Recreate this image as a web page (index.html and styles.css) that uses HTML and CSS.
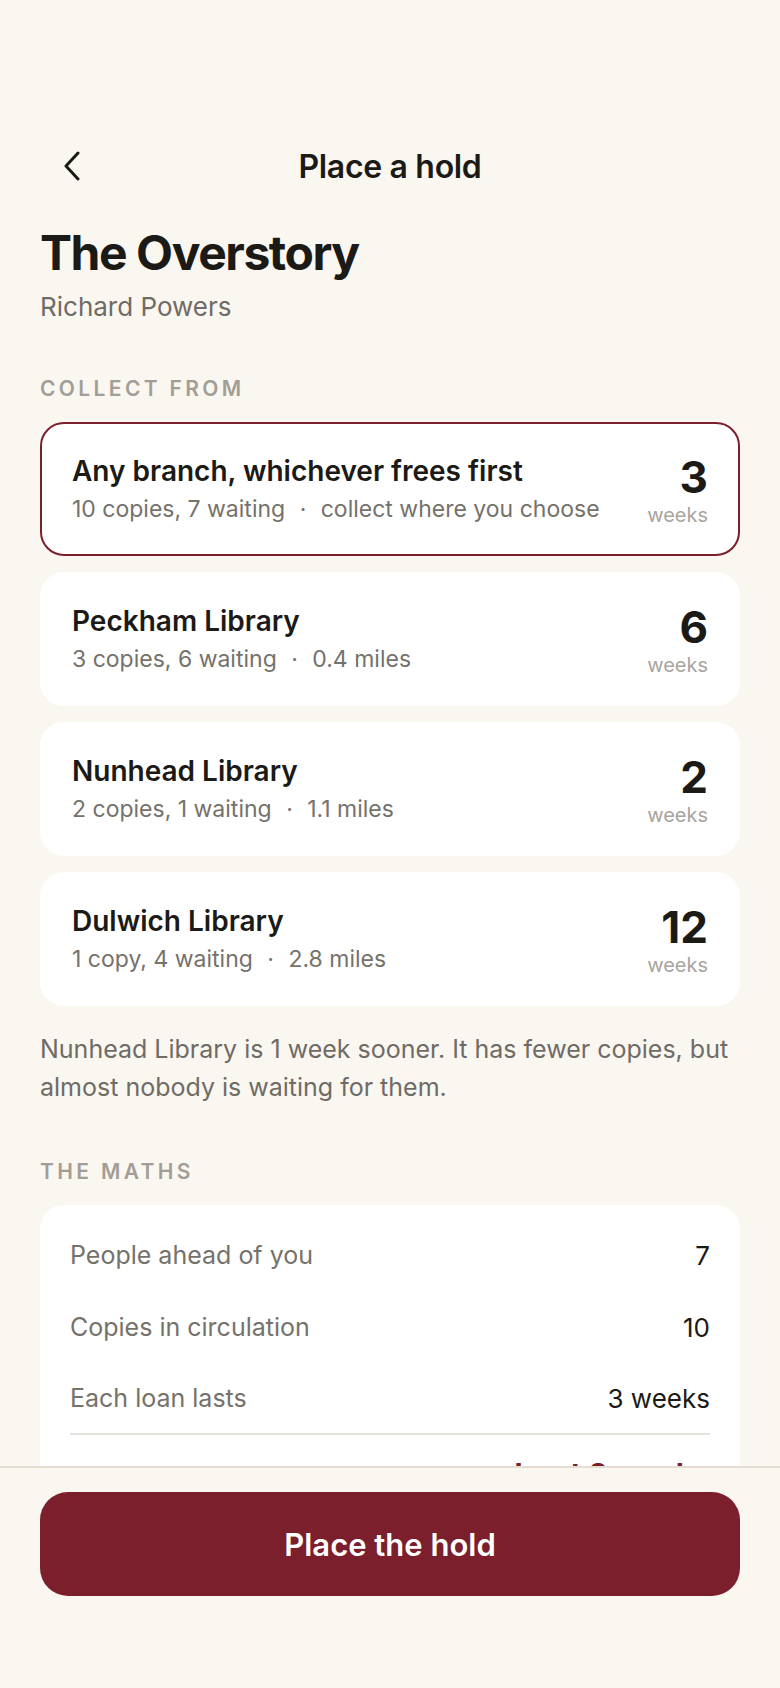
FILE: index.html
```html
<!DOCTYPE html>
<html lang="en">
<head>
    <meta charset="UTF-8">
    <meta name="viewport" content="width=device-width, initial-scale=1.0">
    <title>Place a hold</title>
    <link rel="stylesheet" href="styles.css">
</head>
<body>

<div class="screen">
    <div class="content">
        <header class="topbar">
            <button class="back" aria-label="Back">
                <svg width="20" height="30" viewBox="0 0 20 30" fill="none">
                    <path d="M16 2 L4 15 L16 28" stroke="#1c1a17" stroke-width="3" stroke-linecap="round" stroke-linejoin="round"/>
                </svg>
            </button>
            <h1>Place a hold</h1>
            <span class="spacer"></span>
        </header>

        <div class="book">
            <h2>The Overstory</h2>
            <p>Richard Powers</p>
        </div>

        <h3 class="label">Collect from</h3>

        <div class="branches">
            <div class="branch selected">
                <div class="branch-info">
                    <div class="branch-name">Any branch, whichever frees first</div>
                    <div class="branch-meta">10 copies, 7 waiting <span class="dot">·</span> collect where you choose</div>
                </div>
                <div class="wait">
                    <div class="wait-num">3</div>
                    <div class="wait-unit">weeks</div>
                </div>
            </div>
            <div class="branch">
                <div class="branch-info">
                    <div class="branch-name">Peckham Library</div>
                    <div class="branch-meta">3 copies, 6 waiting <span class="dot">·</span> 0.4 miles</div>
                </div>
                <div class="wait">
                    <div class="wait-num">6</div>
                    <div class="wait-unit">weeks</div>
                </div>
            </div>
            <div class="branch">
                <div class="branch-info">
                    <div class="branch-name">Nunhead Library</div>
                    <div class="branch-meta">2 copies, 1 waiting <span class="dot">·</span> 1.1 miles</div>
                </div>
                <div class="wait">
                    <div class="wait-num">2</div>
                    <div class="wait-unit">weeks</div>
                </div>
            </div>
            <div class="branch">
                <div class="branch-info">
                    <div class="branch-name">Dulwich Library</div>
                    <div class="branch-meta">1 copy, 4 waiting <span class="dot">·</span> 2.8 miles</div>
                </div>
                <div class="wait">
                    <div class="wait-num">12</div>
                    <div class="wait-unit">weeks</div>
                </div>
            </div>
        </div>

        <p class="note">Nunhead Library is 1 week sooner. It has fewer copies, but almost nobody is waiting for them.</p>

        <h3 class="label">The maths</h3>

        <div class="maths">
            <div class="row">
                <span>People ahead of you</span>
                <span class="val">7</span>
            </div>
            <div class="row">
                <span>Copies in circulation</span>
                <span class="val">10</span>
            </div>
            <div class="row last">
                <span>Each loan lasts</span>
                <span class="val">3 weeks</span>
            </div>
            <div class="row total">
                <span>Your wait</span>
                <span class="val">about 3 weeks</span>
            </div>
        </div>
    </div>

    <footer class="actions">
        <button class="primary">Place the hold</button>
    </footer>
</div>

</body>
</html>
```

FILE: styles.css
```css
* {
    box-sizing: border-box;
}
html, body {
    margin: 0;
    padding: 0;
}
body {
    font-family: Inter, "Noto Sans", sans-serif;
    background: #faf7f0;
    color: #1c1a17;
}
.screen {
    height: 100vh;
    display: flex;
    flex-direction: column;
}
.content {
    flex: 1;
    overflow: hidden;
    padding: 138px 40px 0;
}
.topbar {
    height: 56px;
    display: flex;
    align-items: center;
    justify-content: space-between;
}
.back {
    width: 64px;
    height: 56px;
    border: none;
    background: none;
    padding: 0 0 0 22px;
    display: flex;
    align-items: center;
    cursor: pointer;
}
.spacer {
    width: 64px;
}
.topbar h1 {
    margin: 0;
    font-size: 32px;
    font-weight: 600;
    letter-spacing: -0.01em;
}
.book h2 {
    margin: 32px 0 0;
    font-size: 48px;
    line-height: 53px;
    font-weight: 700;
    letter-spacing: -0.03em;
}
.book p {
    margin: 12px 0 0;
    font-size: 26px;
    line-height: 32px;
    color: #6f6b66;
}
.label {
    margin: 54px 0 21px;
    font-size: 21px;
    line-height: 24px;
    font-weight: 600;
    letter-spacing: 0.16em;
    text-transform: uppercase;
    color: #a29e97;
}
.branches {
    display: flex;
    flex-direction: column;
    gap: 16px;
}
.branch {
    height: 134px;
    background: #fff;
    border: 2px solid transparent;
    border-radius: 24px;
    padding: 0 30px;
    display: flex;
    align-items: center;
    justify-content: space-between;
}
.branch.selected {
    border-color: #7a1f2b;
}
.branch-info {
    display: flex;
    flex-direction: column;
    gap: 8px;
}
.branch-name {
    font-size: 28px;
    line-height: 32px;
    font-weight: 600;
}
.branch-meta {
    font-size: 23px;
    line-height: 28px;
    color: #75716b;
}
.dot {
    margin: 0 8px;
}
.wait {
    text-align: right;
}
.wait-num {
    font-size: 44px;
    line-height: 52px;
    font-weight: 700;
}
.wait-unit {
    font-size: 20px;
    line-height: 24px;
    color: #a8a49e;
}
.note {
    margin: 24px 0 0;
    font-size: 25px;
    line-height: 38px;
    color: #6f6b66;
}
.maths {
    background: #fff;
    border-radius: 24px;
    padding: 14px 30px;
}
.row {
    height: 72px;
    display: flex;
    align-items: center;
    justify-content: space-between;
    font-size: 25px;
    color: #75716b;
}
.row .val {
    font-size: 26px;
    color: #1c1a17;
}
.row.last {
    border-bottom: 2px solid #e6e3df;
}
.row.total {
    align-items: baseline;
    padding-top: 21px;
}
.row.total .val {
    color: #7a1f2b;
    font-weight: 700;
    font-size: 30px;
}
.actions {
    border-top: 2px solid #e4ddd3;
    padding: 24px 40px 92px;
}
.primary {
    width: 100%;
    height: 104px;
    border: none;
    border-radius: 28px;
    background: #7a1f2b;
    color: #fff;
    font-family: Inter, "Noto Sans", sans-serif;
    font-size: 31px;
    font-weight: 600;
    cursor: pointer;
}
```
